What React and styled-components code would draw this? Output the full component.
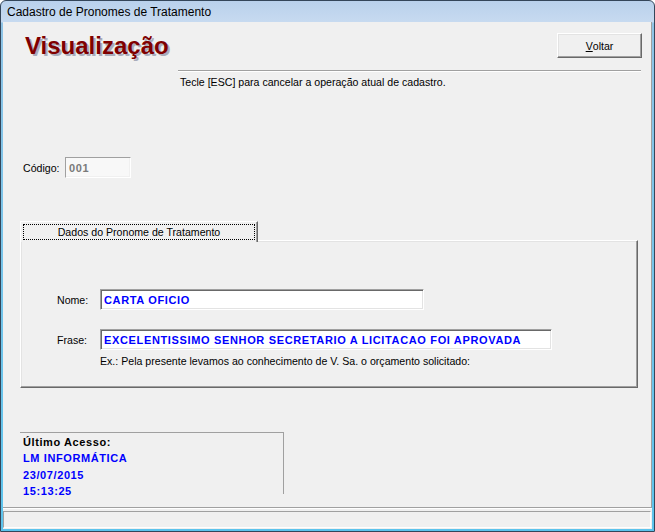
import React from "react";
import styled, { createGlobalStyle } from "styled-components";

// Global ----------------------------------------------------------------------

const GlobalStyle = createGlobalStyle`
  html, body {
    margin: 0;
    padding: 0;
    background: #ffffff;
  }
  * {
    box-sizing: border-box;
  }
`;

const App = () => {
  // Return -------------------------------------------------------------------

  return (
    <>
      <GlobalStyle />
      <Window>
        <TitleBar>Cadastro de Pronomes de Tratamento</TitleBar>
        <Client>
          <Main>
            <Header>
              <Heading>Visualização</Heading>
              <Button>
                <u>V</u>oltar
              </Button>
            </Header>
            <Divider />
            <Hint>Tecle [ESC] para cancelar a operação atual de cadastro.</Hint>

            <CodeRow>
              <Label $width={42}>Código:</Label>
              <TextBox $width={66} $disabled>
                001
              </TextBox>
            </CodeRow>

            <TabArea>
              <TabStrip>
                <Tab>
                  <FocusRect>Dados do Pronome de Tratamento</FocusRect>
                </Tab>
              </TabStrip>
              <TabPanel>
                <FieldRow>
                  <Label $width={43}>Nome:</Label>
                  <TextBox $width={324}>CARTA OFICIO</TextBox>
                </FieldRow>
                <FieldRow $gap={19}>
                  <Label $width={43}>Frase:</Label>
                  <TextBox $width={452}>
                    EXCELENTISSIMO SENHOR SECRETARIO A LICITACAO FOI APROVADA
                  </TextBox>
                </FieldRow>
                <Example>
                  Ex.: Pela presente levamos ao conhecimento de V. Sa. o
                  orçamento solicitado:
                </Example>
              </TabPanel>
            </TabArea>

            <AccessBox>
              <AccessLine>Último Acesso:</AccessLine>
              <AccessLine $blue>LM INFORMÁTICA</AccessLine>
              <AccessLine $blue>23/07/2015</AccessLine>
              <AccessLine $blue>15:13:25</AccessLine>
            </AccessBox>
          </Main>
          <Separator />
          <StatusBar />
        </Client>
      </Window>
    </>
  );
  // --------------------------------------------------------------------------
};

// Styled Components ----------------------------------------------------------

const Window = styled.div`
  width: 655px;
  height: 532px;
  display: flex;
  flex-direction: column;
  border: 1px solid #34465a;
  border-radius: 6px 6px 0 0;
  background: linear-gradient(to bottom, #b9d1ec 0px, #c7daf0 21px, #8fc4e6 22px, #5cc3ec 100%);
  overflow: hidden;
  font-family: "Liberation Sans", Arial, sans-serif;
`;

const TitleBar = styled.div`
  height: 21px;
  flex: none;
  padding-left: 6px;
  display: flex;
  align-items: center;
  font-size: 12px;
  color: #000000;
`;

const Client = styled.div`
  flex: none;
  height: 507px;
  margin: 0 2px;
  background: #f0f0f0;
  display: flex;
  flex-direction: column;
`;

const Main = styled.div`
  flex: 1;
  display: flex;
  flex-direction: column;
  border-right: 1px solid #a0a0a0;
  font-size: 10.6px;
  color: #000000;
`;

const Header = styled.div`
  height: 37px;
  padding: 11px 9px 0 22px;
  display: flex;
  justify-content: space-between;
  align-items: flex-start;
`;

const Heading = styled.h1`
  margin: 1px 0 0;
  font-family: "Liberation Sans", Arial, sans-serif;
  font-size: 24px;
  line-height: 24px;
  font-weight: bold;
  color: #800000;
  text-shadow: 2px 2px 0 #a9adbb;
`;

const Button = styled.div`
  width: 85px;
  height: 25px;
  display: flex;
  align-items: center;
  justify-content: center;
  font-size: 10.6px;
  background: #f0f0f0;
  border-top: 1px solid #ffffff;
  border-left: 1px solid #ffffff;
  border-right: 1px solid #696969;
  border-bottom: 1px solid #696969;
  box-shadow: inset -1px -1px 0 #a0a0a0, inset 1px 1px 0 #e3e3e3;
`;

const Divider = styled.div`
  margin: 11px 10px 0 175px;
  border-top: 1px solid #a0a0a0;
  border-bottom: 1px solid #ffffff;
`;

const Hint = styled.div`
  margin: 3px 0 0 177px;
  line-height: 14px;
`;

const CodeRow = styled.div`
  margin-top: 68px;
  padding-left: 20px;
  display: flex;
  align-items: center;
`;

const Label = styled.div`
  width: ${(p) => p.$width}px;
  flex: none;
  line-height: 14px;
`;

const TextBox = styled.div`
  width: ${(p) => p.$width}px;
  height: 21px;
  flex: none;
  display: flex;
  align-items: center;
  padding-left: 3px;
  white-space: nowrap;
  font-size: 11px;
  font-weight: bold;
  letter-spacing: 0.65px;
  color: ${(p) => (p.$disabled ? "#7a7a7a" : "#0000ff")};
  background: ${(p) => (p.$disabled ? "#f8f8f8" : "#ffffff")};
  border-top: 1px solid #a0a0a0;
  border-left: 1px solid #a0a0a0;
  border-right: 1px solid #ffffff;
  border-bottom: 1px solid #ffffff;
  box-shadow: ${(p) =>
    p.$disabled
      ? "inset -1px -1px 0 #f0f0f0"
      : "inset 1px 1px 0 #696969, inset -1px -1px 0 #e3e3e3"};
`;

const TabArea = styled.div`
  margin: 44px 0 0 17px;
  width: 618px;
  display: flex;
  flex-direction: column;
`;

const TabStrip = styled.div`
  display: flex;
  position: relative;
  z-index: 1;
  margin-bottom: -2px;
  margin-top: -1px;
`;

const Tab = styled.div`
  width: 238px;
  height: 21px;
  padding: 2px 2px 2px 2px;
  background: #f0f0f0;
  border-top: 1px solid #ffffff;
  border-left: 1px solid #ffffff;
  border-right: 1px solid #696969;
  box-shadow: inset -1px 0 0 #a0a0a0;
`;

const FocusRect = styled.div`
  height: 16px;
  display: flex;
  align-items: center;
  justify-content: center;
  border: 1px dotted #000000;
  white-space: nowrap;
`;

const TabPanel = styled.div`
  height: 148px;
  padding: 48px 0 0 36px;
  border-top: 1px solid #ffffff;
  border-left: 1px solid #ffffff;
  border-right: 1px solid #696969;
  border-bottom: 1px solid #696969;
  box-shadow: inset -1px -1px 0 #a0a0a0, inset 1px 1px 0 #e3e3e3;
`;

const FieldRow = styled.div`
  margin-top: ${(p) => p.$gap || 0}px;
  display: flex;
  align-items: center;
`;

const Example = styled.div`
  margin: 4px 0 0 43px;
  line-height: 14px;
  white-space: nowrap;
`;

const AccessBox = styled.div`
  margin: 44px 0 0 17px;
  width: 264px;
  height: 62px;
  padding: 1px 0 0 3px;
  border-top: 1px solid #a0a0a0;
  border-right: 1px solid #a0a0a0;
`;

const AccessLine = styled.div`
  line-height: 16.4px;
  font-size: 11px;
  font-weight: bold;
  letter-spacing: 0.6px;
  white-space: nowrap;
  color: ${(p) => (p.$blue ? "#0000ff" : "#000000")};
`;

const Separator = styled.div`
  flex: none;
  border-top: 1px solid #a0a0a0;
  border-bottom: 1px solid #ffffff;
`;

const StatusBar = styled.div`
  flex: none;
  height: 17px;
  margin: 2px 1px 1px 0;
  border-top: 1px solid #a0a0a0;
  border-left: 1px solid #a0a0a0;
  border-right: 1px solid #ffffff;
  border-bottom: 1px solid #ffffff;
`;
// ----------------------------------------------------------------------------

export default App;
